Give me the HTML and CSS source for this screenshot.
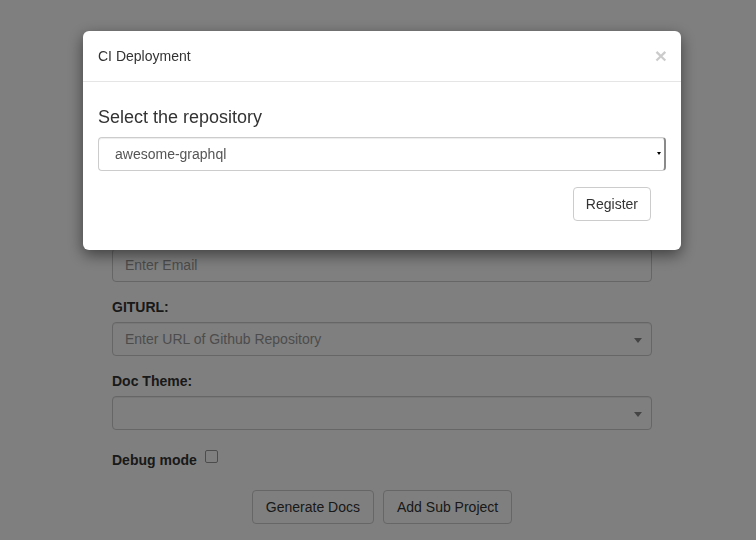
FILE: index.html
```html
<!DOCTYPE html>
<html>
<head>
<meta charset="utf-8">
<link rel="stylesheet" href="styles.css">
</head>
<body>
<div class="page">
  <form class="form">
    <div class="group">
      <label class="lbl">Email:</label>
      <div class="input placeholder">Enter Email</div>
    </div>
    <div class="group">
      <label class="lbl">GITURL:</label>
      <div class="input select placeholder">Enter URL of Github Repository<span class="caret"></span></div>
    </div>
    <div class="group">
      <label class="lbl">Doc Theme:</label>
      <div class="input select"><span class="caret"></span></div>
    </div>
    <div class="debug">
      <span class="lbl">Debug mode</span><span class="checkbox"></span>
    </div>
    <div class="actions">
      <button type="button" class="btn">Generate Docs</button>
      <button type="button" class="btn">Add Sub Project</button>
    </div>
  </form>
</div>
<div class="backdrop"></div>
<div class="modal">
  <div class="modal-header">
    <span class="modal-title">CI Deployment</span>
    <span class="close">×</span>
  </div>
  <div class="modal-body">
    <h4 class="heading">Select the repository</h4>
    <div class="native-select">
      <span class="value">awesome-graphql</span>
      <span class="native-arrow"></span>
    </div>
    <div class="modal-footer">
      <button type="button" class="btn">Register</button>
    </div>
  </div>
</div>
</body>
</html>
```

FILE: styles.css
```css
* { box-sizing: border-box; }
html, body {
  margin: 0;
  padding: 0;
  background: #fff;
  font-family: "Liberation Sans", Arial, sans-serif;
  font-size: 14px;
  line-height: 20px;
  color: #333;
  height: 540px;
  overflow: hidden;
}
.page {
  padding: 223px 0 0 112px;
}
.form {
  width: 540px;
  margin: 0;
}
.group {
  margin-bottom: 15px;
}
.lbl {
  display: block;
  font-weight: bold;
  margin-bottom: 5px;
  line-height: 20px;
}
.input {
  position: relative;
  height: 34px;
  padding: 6px 12px;
  border: 1px solid #ccc;
  border-radius: 4px;
  background: #fff;
  color: #555;
  box-shadow: inset 0 1px 1px rgba(0,0,0,.075);
}
.placeholder { color: #999; }
.caret {
  position: absolute;
  right: 9px;
  top: 15px;
  width: 0;
  height: 0;
  border-left: 4px solid transparent;
  border-right: 4px solid transparent;
  border-top: 5px solid #888;
}
.debug {
  display: flex;
  align-items: flex-start;
  margin-top: 20px;
  height: 20px;
}
.debug .lbl {
  display: inline-block;
  margin: 0;
}
.checkbox {
  display: inline-block;
  width: 13px;
  height: 13px;
  margin-left: 8px;
  margin-top: 0;
  border: 1px solid #999;
  border-radius: 2px;
  background: #fff;
}
.actions {
  display: flex;
  justify-content: center;
  gap: 9px;
  margin-top: 20px;
}
.btn {
  font-family: "Liberation Sans", Arial, sans-serif;
  font-size: 14px;
  line-height: 20px;
  height: 34px;
  padding: 6px 13px;
  color: #333;
  background: #fff;
  border: 1px solid #ccc;
  border-radius: 4px;
  margin: 0;
}
.backdrop {
  position: fixed;
  inset: 0;
  background: rgba(0,0,0,.5);
}
.modal {
  position: fixed;
  left: 83px;
  top: 31px;
  width: 598px;
  background: #fff;
  border-radius: 6px;
  box-shadow: 0 5px 15px rgba(0,0,0,.5);
}
.modal-header {
  display: flex;
  justify-content: space-between;
  align-items: center;
  padding: 15px;
  height: 51px;
  border-bottom: 1px solid #e5e5e5;
}
.modal-title {
  font-size: 14px;
  line-height: 20px;
  color: #333;
}
.close {
  font-size: 21px;
  font-weight: bold;
  line-height: 1;
  color: #000;
  opacity: .2;
  margin-top: -2px;
  margin-right: -1px;
}
.modal-body {
  padding: 15px;
}
.heading {
  font-size: 18px;
  font-weight: 500;
  line-height: 20px;
  margin: 10px 0 10px;
  color: #333;
}
.native-select {
  position: relative;
  height: 34px;
  width: 568px;
  border: 1px solid #ccc;
  border-right: 2px solid #8a8a8a;
  border-radius: 4px;
  padding: 6px 12px 6px 16px;
  box-shadow: inset 0 1px 1px rgba(0,0,0,.075);
  color: #555;
}
.native-arrow {
  position: absolute;
  right: 3px;
  top: 14px;
  width: 0;
  height: 0;
  border-left: 2px solid transparent;
  border-right: 2px solid transparent;
  border-top: 3px solid #000;
}
.modal-footer {
  display: flex;
  justify-content: flex-end;
  padding: 16px 15px 14px;
}
.modal-footer .btn {
  padding: 6px 12px;
}
```
